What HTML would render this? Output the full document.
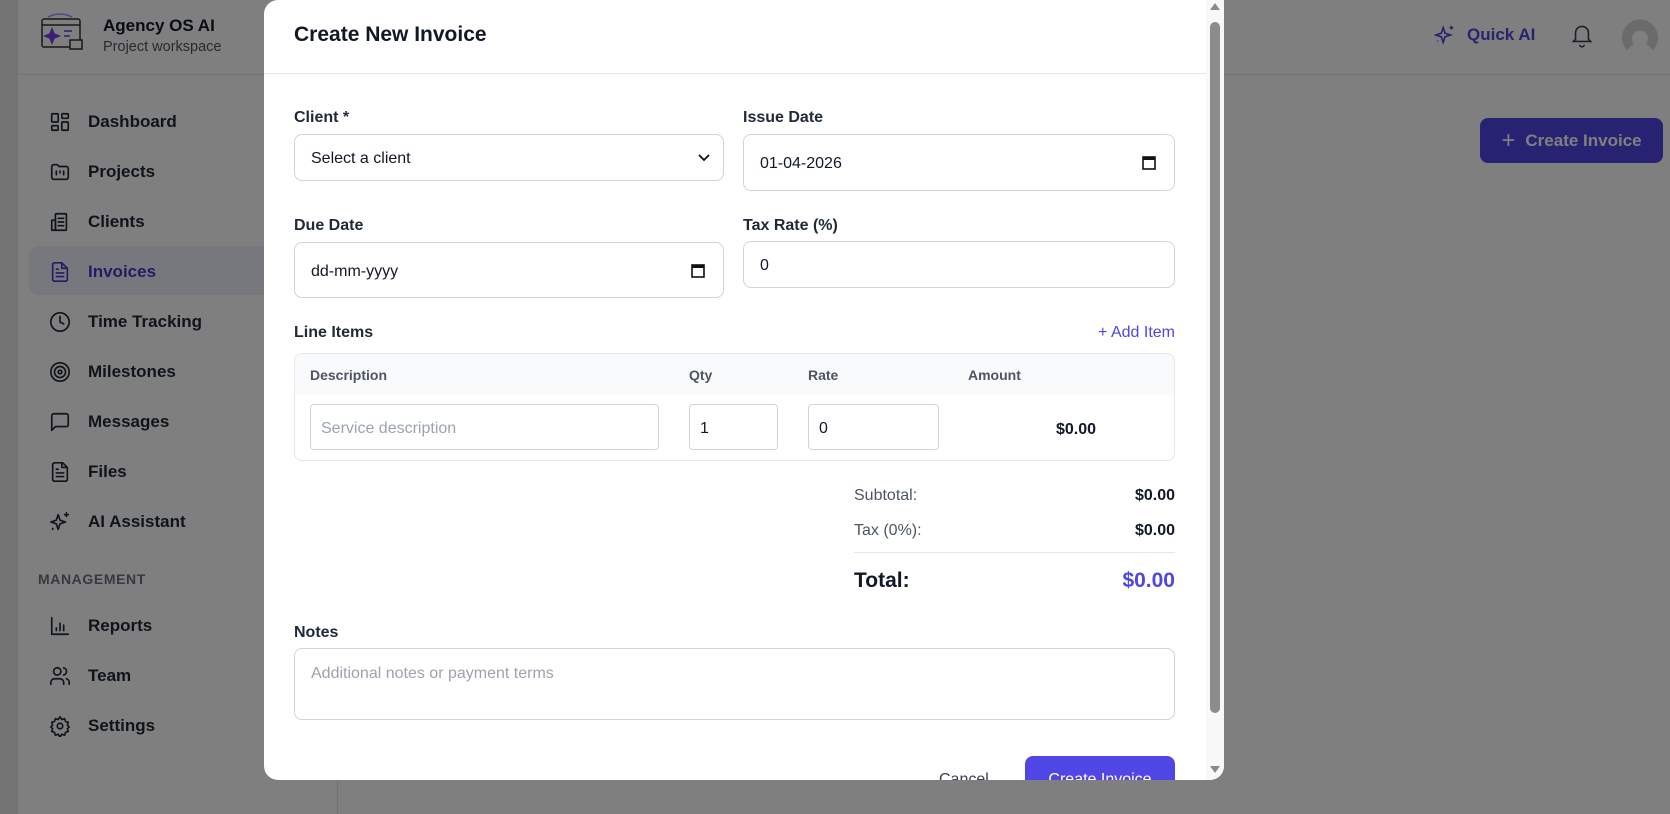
<!DOCTYPE html>
<html><head><meta charset="utf-8"><style>
*{box-sizing:border-box;margin:0;padding:0}
body{width:1670px;height:814px;overflow:hidden;font-family:"Liberation Sans",sans-serif;background:#fff;position:relative;color:#111827}
.side{position:absolute;left:0;top:0;width:338px;height:814px;background:#fff;border-right:1px solid #e5e7eb}
.strip{position:absolute;left:0;top:0;width:18px;height:814px;background:#e8e8e8}
.hdr{position:absolute;left:18px;top:0;width:1652px;height:75px;border-bottom:1px solid #e5e7eb;background:#fff}
.nav{position:absolute;left:49px;font-size:17px;color:#1f2937;font-weight:600;display:flex;align-items:center}
.nav svg{width:22px;height:22px;margin-right:17px;fill:none;stroke:#1f2937;stroke-width:1.8;stroke-linecap:round;stroke-linejoin:round}
.ov{position:absolute;inset:0;background:rgba(0,0,0,0.5)}
.modal{position:absolute;left:264px;top:0;width:960px;height:780px;background:#fff;border-radius:0 0 14px 14px;overflow:hidden;border-top-left-radius:14px}
.lbl{position:absolute;font-size:16px;font-weight:600;color:#1f2937}
.inp{position:absolute;border:1px solid #d1d5db;border-radius:8px;font-size:16px;color:#111827;display:flex;align-items:center;padding-left:16px;padding-top:3px}
.ph{color:#9ca3af}
.sb{position:absolute;right:0;top:0;width:18px;height:780px;background:#f8f8f8}
</style></head><body>
<div class="side"></div>
<div class="strip"></div>
<div class="hdr"></div>
<svg style="position:absolute;left:40px;top:13px" width="46" height="42" viewBox="0 0 46 42" fill="none" stroke="#333" stroke-width="1.5"><rect x="2" y="6" width="38" height="28" rx="2"/><line x1="2" y1="12" x2="40" y2="12"/><path d="M12 16 l2 5 5 2 -5 2 -2 5 -2 -5 -5 -2 5 -2z" fill="#7c3aed" stroke="#7c3aed"/><line x1="24" y1="18" x2="32" y2="18" stroke="#4f46e5"/><line x1="24" y1="23" x2="30" y2="23" stroke="#4f46e5"/><rect x="30" y="27" width="12" height="9" fill="#fff"/><path d="M8 4 Q20 -2 32 4" stroke="#a78bfa"/></svg>
<div style="position:absolute;left:103px;top:16px;font-size:17px;font-weight:600;color:#111827">Agency OS AI</div>
<div style="position:absolute;left:103px;top:39px;font-size:14.5px;color:#4b5563">Project workspace</div>
<div style="position:absolute;left:29px;top:246px;width:300px;height:49px;background:#eef0fb;border-radius:10px"></div>
<div class="nav" style="top:111px"><svg viewBox="0 0 24 24"><rect x="3" y="3" width="7" height="9" rx="1"/><rect x="14" y="3" width="7" height="5" rx="1"/><rect x="14" y="12" width="7" height="9" rx="1"/><rect x="3" y="16" width="7" height="5" rx="1"/></svg>Dashboard</div>
<div class="nav" style="top:161px"><svg viewBox="0 0 24 24"><path d="M3 6a2 2 0 012-2h4l2 2h8a2 2 0 012 2v10a2 2 0 01-2 2H5a2 2 0 01-2-2z"/><path d="M8 11v4M12 11v2M16 11v4"/></svg>Projects</div>
<div class="nav" style="top:211px"><svg viewBox="0 0 24 24"><rect x="7" y="3" width="12" height="18" rx="1"/><path d="M3 10h4v11H3zM10 8h6M10 12h6M10 16h6"/></svg>Clients</div>
<div class="nav" style="top:261px;color:#4338ca"><svg viewBox="0 0 24 24" style="stroke:#4338ca"><path d="M14 2H6a2 2 0 00-2 2v16a2 2 0 002 2h12a2 2 0 002-2V8z"/><path d="M14 2v6h6M8 13h8M8 17h8M8 9h2"/></svg>Invoices</div>
<div class="nav" style="top:311px"><svg viewBox="0 0 24 24"><circle cx="12" cy="12" r="10"/><path d="M12 6v6l4 2"/></svg>Time Tracking</div>
<div class="nav" style="top:361px"><svg viewBox="0 0 24 24"><circle cx="12" cy="12" r="10"/><circle cx="12" cy="12" r="6"/><circle cx="12" cy="12" r="2"/></svg>Milestones</div>
<div class="nav" style="top:411px"><svg viewBox="0 0 24 24"><path d="M21 15a2 2 0 01-2 2H7l-4 4V5a2 2 0 012-2h14a2 2 0 012 2z"/></svg>Messages</div>
<div class="nav" style="top:461px"><svg viewBox="0 0 24 24"><path d="M15 2H6a2 2 0 00-2 2v16a2 2 0 002 2h12a2 2 0 002-2V7z"/><path d="M14 2v5h5M8 13h8M8 17h8M8 9h2"/></svg>Files</div>
<div class="nav" style="top:511px"><svg viewBox="0 0 24 24"><path d="M10 4l2 6 6 2-6 2-2 6-2-6-6-2 6-2z"/><path d="M19 2v4M17 4h4M4 19v1"/></svg>AI Assistant</div>
<div style="position:absolute;left:38px;top:571px;font-size:14px;font-weight:600;letter-spacing:0.6px;color:#6b7280">MANAGEMENT</div>
<div class="nav" style="top:615px"><svg viewBox="0 0 24 24"><path d="M3 3v18h18M8 17v-3M12 17V9M16 17v-6"/></svg>Reports</div>
<div class="nav" style="top:665px"><svg viewBox="0 0 24 24"><path d="M16 21v-2a4 4 0 00-4-4H6a4 4 0 00-4 4v2"/><circle cx="9" cy="7" r="4"/><path d="M22 21v-2a4 4 0 00-3-3.9M16 3.1a4 4 0 010 7.8"/></svg>Team</div>
<div class="nav" style="top:715px"><svg viewBox="0 0 24 24"><circle cx="12" cy="12" r="3"/><path d="M12 2l2 3 3-1 1 3 3 1-1 3 2 2-2 2 1 3-3 1-1 3-3-1-2 3-2-3-3 1-1-3-3-1 1-3-2-2 2-2-1-3 3-1 1-3 3 1z"/></svg>Settings</div>
<svg style="position:absolute;left:1434px;top:24px" width="22" height="22" viewBox="0 0 24 24" fill="none" stroke="#4f46e5" stroke-width="1.8"><path d="M10 4l2 6 6 2-6 2-2 6-2-6-6-2 6-2z"/><path d="M19 2v4M17 4h4M4 18v1"/></svg>
<div style="position:absolute;left:1467px;top:25px;font-size:17px;font-weight:600;color:#4f46e5">Quick AI</div>
<svg style="position:absolute;left:1569px;top:21px" width="26" height="28" viewBox="0 0 24 26" fill="none" stroke="#374151" stroke-width="1.5"><path d="M18 17V11a6 6 0 00-12 0v6l-2 2h16z"/><path d="M10 22a2 2 0 004 0"/></svg>
<svg style="position:absolute;left:1619px;top:13px" width="42" height="44" viewBox="0 0 42 44"><path d="M8 37 A18 18 0 1 1 34 37 L27 31 A8 8 0 1 0 15 31 Z" fill="#d6d6d6"/></svg>
<div style="position:absolute;left:1480px;top:118px;width:183px;height:45px;background:#4f46e5;border-radius:8px;color:#fff;font-size:17px;font-weight:600;display:flex;align-items:center;justify-content:center"><span style="font-size:24px;font-weight:300;margin-right:10px">+</span>Create Invoice</div>
<div class="ov"></div>
<div class="modal">
<div style="position:absolute;left:30px;top:23px;font-size:21px;font-weight:600;color:#111827">Create New Invoice</div>
<div style="position:absolute;left:0;top:73px;width:942px;height:1px;background:#e5e7eb"></div>
<div class="lbl" style="left:30px;top:109px">Client *</div>
<div class="inp" style="left:30px;top:134px;width:430px;height:47px">Select a client<svg style="position:absolute;right:12px;top:16px" width="14" height="14" viewBox="0 0 14 14" fill="none" stroke="#111" stroke-width="1.8"><path d="M2 4l5 5 5-5"/></svg></div>
<div class="lbl" style="left:479px;top:109px">Issue Date</div>
<div class="inp" style="left:479px;top:134px;width:432px;height:57px">01-04-2026<svg style="position:absolute;right:18px;top:20px" width="14" height="15" viewBox="0 0 14 15"><rect x="1" y="2" width="12" height="12" fill="none" stroke="#111" stroke-width="1.6"/><rect x="1" y="2" width="12" height="3" fill="#111"/></svg></div>
<div class="lbl" style="left:30px;top:217px">Due Date</div>
<div class="inp" style="left:30px;top:242px;width:430px;height:56px">dd-mm-yyyy<svg style="position:absolute;right:18px;top:20px" width="14" height="15" viewBox="0 0 14 15"><rect x="1" y="2" width="12" height="12" fill="none" stroke="#111" stroke-width="1.6"/><rect x="1" y="2" width="12" height="3" fill="#111"/></svg></div>
<div class="lbl" style="left:479px;top:217px">Tax Rate (%)</div>
<div class="inp" style="left:479px;top:241px;width:432px;height:47px">0</div>
<div class="lbl" style="left:30px;top:324px">Line Items</div>
<div style="position:absolute;right:49px;top:324px;font-size:16px;color:#4f46e5">+ Add Item</div>
<div style="position:absolute;left:30px;top:353px;width:881px;height:108px;border:1px solid #e5e7eb;border-radius:8px;overflow:hidden">
<div style="height:41px;background:#f9fafb;font-size:14px;font-weight:600;color:#4b5563;position:relative">
<span style="position:absolute;left:15px;top:13px">Description</span><span style="position:absolute;left:394px;top:13px">Qty</span><span style="position:absolute;left:513px;top:13px">Rate</span><span style="position:absolute;left:673px;top:13px">Amount</span></div>
</div>
<div class="inp" style="left:46px;top:404px;width:349px;height:46px;border-radius:4px;padding-left:10px"><span class="ph">Service description</span></div>
<div class="inp" style="left:425px;top:404px;width:89px;height:46px;border-radius:4px;padding-left:10px">1</div>
<div class="inp" style="left:544px;top:404px;width:131px;height:46px;border-radius:4px;padding-left:10px">0</div>
<div style="position:absolute;left:792px;top:421px;font-size:16px;font-weight:600">$0.00</div>
<div style="position:absolute;left:590px;top:487px;font-size:16px;color:#4b5563">Subtotal:</div>
<div style="position:absolute;right:49px;top:487px;font-size:16px;font-weight:600">$0.00</div>
<div style="position:absolute;left:590px;top:522px;font-size:16px;color:#4b5563">Tax (0%):</div>
<div style="position:absolute;right:49px;top:522px;font-size:16px;font-weight:600">$0.00</div>
<div style="position:absolute;left:590px;top:552px;width:321px;height:1px;background:#e5e7eb"></div>
<div style="position:absolute;left:590px;top:569px;font-size:21px;font-weight:700">Total:</div>
<div style="position:absolute;right:49px;top:569px;font-size:21px;font-weight:600;color:#4f46e5">$0.00</div>
<div class="lbl" style="left:30px;top:624px">Notes</div>
<div class="inp" style="left:30px;top:648px;width:881px;height:72px;align-items:flex-start;padding-top:16px"><span class="ph">Additional notes or payment terms</span></div>
<div style="position:absolute;left:675px;top:771px;font-size:16px;color:#374151">Cancel</div>
<div style="position:absolute;left:761px;top:756px;width:150px;height:50px;background:#4f46e5;border-radius:8px;color:#fff;font-size:16px;text-align:center;padding-top:15px">Create Invoice</div>
<div class="sb"><div style="position:absolute;left:4px;top:3px;border:5px solid transparent;border-bottom:7px solid #8a8a8a;border-top:0"></div><div style="position:absolute;left:4px;top:22px;width:10px;height:691px;background:#8c8c8c;border-radius:5px"></div><div style="position:absolute;left:4px;top:766px;border:5px solid transparent;border-top:7px solid #8a8a8a;border-bottom:0"></div></div>
</div>
</body></html>
